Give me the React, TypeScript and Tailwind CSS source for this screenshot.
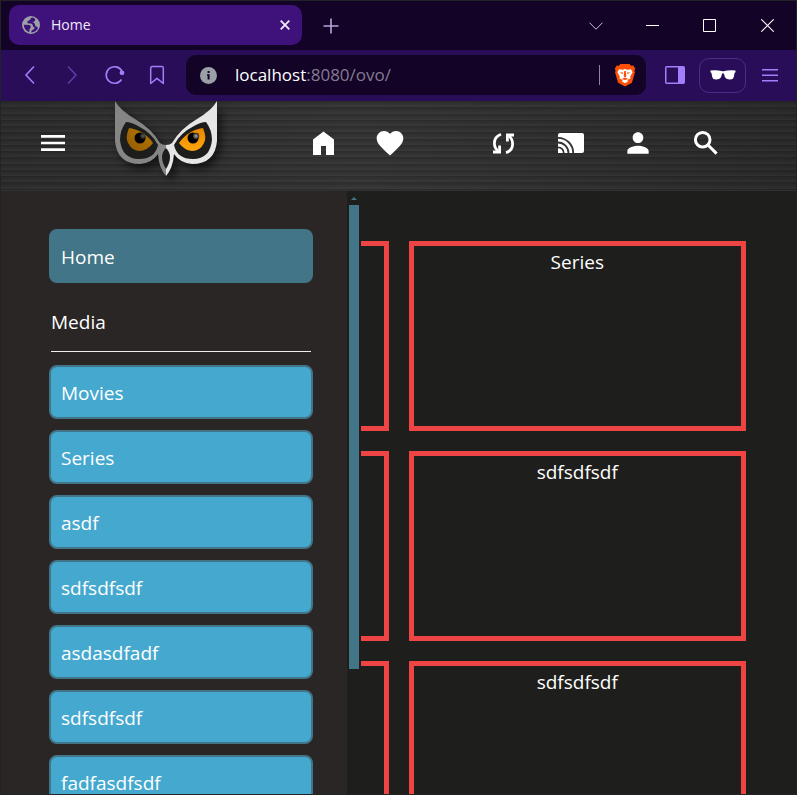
import type { ReactNode } from "react";
import { MdFavorite, MdPerson, MdMenu } from "react-icons/md";

const media = ["Movies", "Series", "asdf", "sdfsdfsdf", "asdasdfadf", "sdfsdfsdf", "fadfasdfsdf"];
const cards = ["", "Series", "", "sdfsdfsdf", "", "sdfsdfsdf"];

function IconButton({ label, className, children }: { label: string; className?: string; children: ReactNode }) {
  return (
    <button type="button" aria-label={label} className={"flex shrink-0 items-center justify-center " + (className ?? "")}>
      {children}
    </button>
  );
}

function TitleBar() {
  return (
    <div className="flex h-[49px] items-center bg-[#130327] pl-2 text-[#d8ccf5]">
      <div className="mb-[2px] flex h-10 w-[293px] shrink-0 items-center rounded-[10px] bg-[#3f117b] pr-[7px] pl-3">
        <svg width="20" height="20" viewBox="0 0 20 20" className="shrink-0">
          <circle cx="10" cy="10" r="9" fill="#9aa0a6" />
          <path
            d="M11.500 2.600Q9 3 9 5.200 6.500 5 6.300 7q.2 1.800 2.500 1.500 2.800-.5 3 2 .2 1.700 1.700 2 .3 1.800-1.500 2.300-1.800.3-1.800 2.700 5-.3 6.800-4.500-1-1.500-2.800-2 0-3.500-3-4 3.300-.3 3-2.700-.2-1.200-2.700-1.700z"
            fill="#3f117b"
          />
          <path d="M2.800 9.800l5.700.2q2 .8 1 2.700-1.500 1-1.200 4.500Q3 15.500 2.800 9.800z" fill="#3f117b" />
        </svg>
        <span className="ml-[10px] flex-1 text-[14px] text-[#f0eafa]">Home</span>
        <IconButton label="Close tab" className="size-5 text-[#f0eafa]">
          <svg width="10" height="10" viewBox="0 0 10 10" stroke="currentColor" strokeWidth="1.8">
            <path d="M.7.7l8.6 8.6M9.3.7L.7 9.3" />
          </svg>
        </IconButton>
      </div>
      <IconButton label="New tab" className="ml-[19px] size-5 text-[#b7a6dd]">
        <svg width="16" height="16" viewBox="0 0 16 16" stroke="currentColor" strokeWidth="1.6">
          <path d="M8 .5v15M.5 8h15" />
        </svg>
      </IconButton>
      <div className="ml-auto flex items-center text-white">
        <IconButton label="Search tabs" className="h-10 w-[57px] text-[#c9c2d4]">
          <svg width="14" height="8" viewBox="0 0 14 8" fill="none" stroke="currentColor">
            <path d="M.5.7L7 7.2 13.5.7" />
          </svg>
        </IconButton>
        <IconButton label="Minimize" className="h-10 w-[57px]">
          <svg width="13" height="1" viewBox="0 0 13 1" fill="currentColor">
            <path d="M0 0h13v1H0z" />
          </svg>
        </IconButton>
        <IconButton label="Maximize" className="h-10 w-[57px]">
          <svg width="13" height="13" viewBox="0 0 13 13" fill="none" stroke="currentColor">
            <path d="M.5.5h12v12H.5z" />
          </svg>
        </IconButton>
        <IconButton label="Close window" className="h-10 w-[58px]">
          <svg width="13" height="13" viewBox="0 0 13 13" fill="none" stroke="currentColor" strokeWidth="1.1">
            <path d="M.3.3l12.4 12.4M12.7.3L.3 12.7" />
          </svg>
        </IconButton>
      </div>
    </div>
  );
}

function AddressBar() {
  return (
    <div className="flex h-[51px] items-center bg-[#2a0d58] pr-[14px] pb-px pl-[18px] text-[#a47dfa]">
      <IconButton label="Back" className="size-6">
        <svg width="24" height="24" viewBox="0 0 24 24" fill="none" stroke="currentColor" strokeWidth="1.6">
          <path d="M15 3.5L7 12l8 8.5" />
        </svg>
      </IconButton>
      <IconButton label="Forward" className="ml-[18px] size-6 text-[#5f3ba3]">
        <svg width="24" height="24" viewBox="0 0 24 24" fill="none" stroke="currentColor" strokeWidth="1.6">
          <path d="M7 3.5l8 8.5-8 8.5" />
        </svg>
      </IconButton>
      <IconButton label="Reload" className="ml-[18px] size-6">
        <svg width="24" height="24" viewBox="0 0 24 24" fill="none" stroke="currentColor" strokeWidth="1.6">
          <path d="M18.500 16.500A8.300 8.300 0 1 1 18.800 8" />
          <circle cx="19" cy="9.800" r="2.400" fill="currentColor" stroke="none" />
        </svg>
      </IconButton>
      <IconButton label="Bookmark" className="ml-[18px] size-6">
        <svg width="24" height="24" viewBox="0 0 24 24" fill="none" stroke="currentColor" strokeWidth="1.5" strokeLinejoin="round">
          <path d="M7 3.5h10a1.5 1.5 0 0 1 1.3 1.5v15.500L12 15.300l-6.300 5.200V5A1.500 1.500 0 0 1 7 3.500z" />
        </svg>
      </IconButton>
      <div className="ml-[17px] flex h-10 min-w-0 flex-1 items-center rounded-[10px] bg-[#130327] pr-[10px] pl-[14px]">
        <svg width="17" height="17" viewBox="0 0 17 17" className="shrink-0">
          <circle cx="8.500" cy="8.500" r="8.500" fill="#9aa0a6" />
          <path d="M7.600 4h2v2h-2zM7 7.200h2.600v5.400h-2V8.800H7z" fill="#130327" />
        </svg>
        <a href="#" className="ml-[18px] flex-1 truncate text-[17px] leading-6 text-[#857b93]">
          <span className="text-white">localhost</span>:8080/ovo/
        </a>
        <div className="h-5 w-px bg-[#8d8696]" />
        <IconButton label="Brave Shields" className="ml-[13px] h-6 w-[23px]">
          <svg width="22" height="24" viewBox="0 0 22 24">
            <path d="M6.5 1h9l1.7 1.7 2-.2 2 3-.8 2.3.5 1.7-3 10.2L11 23.5 4.100 19.700 1.100 9.500l.5-1.700-.8-2.300 2-3 2 .2z" fill="#fb4f08" />
            <path d="M5 6.200l3.800.5L11 6l2.200.7 3.800-.5 1.600 3-2.400 4.300.3 2-3.200 1.600.8 1.300L11 20.300l-3.100-1.900.8-1.300-3.200-1.600.3-2-2.400-4.300z" fill="#fff" />
            <path d="M5.500 9l3.700.7-.7 1.500zM16.500 9l-3.700.7.700 1.500zM10.200 8h1.600l.5 5.500-1.300.7-1.300-.7zM7.500 16l3.500-1.500 3.500 1.500-3.500.9z" fill="#fb4f08" />
          </svg>
        </IconButton>
      </div>
      <IconButton label="Sidebar" className="ml-[17px] size-6">
        <svg width="20" height="18" viewBox="0 0 20 18">
          <rect x=".75" y=".75" width="18.500" height="16.500" rx="1" fill="none" stroke="currentColor" strokeWidth="1.500" />
          <path d="M13 1h6v16h-6z" fill="currentColor" />
        </svg>
      </IconButton>
      <IconButton label="Private profile" className="ml-3 h-[35px] w-[47px] rounded-[10px] border border-[#4d2c86] text-white">
        <svg width="26" height="10" viewBox="0 0 26 10" fill="currentColor">
          <path d="M.5.500Q6.500-.3 11.500 1q1.500.5 3 0 5-1.300 11-.5v1.800l-.9.500-.8 4.200Q23.200 9.600 20 9.500q-4.300 0-5.300-3L14 3.700q-1-.8-2 0l-.7 2.800q-1 3-5.300 3Q2.800 9.600 2.200 7l-.8-4.200-.9-.5z" />
        </svg>
      </IconButton>
      <IconButton label="Browser menu" className="ml-3 size-6">
        <svg width="16" height="14" viewBox="0 0 16 14" fill="currentColor">
          <path d="M0 1h16v1.500H0zM0 6.500h16V8H0zM0 12h16v1.500H0z" />
        </svg>
      </IconButton>
    </div>
  );
}

function OwlLogo() {
  return (
    <svg width="104" height="78" viewBox="0 0 104 78" className="shrink-0 drop-shadow-[4px_5px_4px_rgba(0,0,0,0.6)]">
      <defs>
        <linearGradient id="iris" x1="0" y1="0" x2="0" y2="1">
          <stop offset="0" stopColor="#e88700" />
          <stop offset="1" stopColor="#ffa60a" />
        </linearGradient>
        <linearGradient id="irisShade" x1="0" y1="0" x2="1" y2="1">
          <stop offset="0" stopColor="#bd7a00" />
          <stop offset="1" stopColor="#8f5a02" />
        </linearGradient>
        <radialGradient id="glint">
          <stop offset="0" stopColor="#aaa" />
          <stop offset="1" stopColor="#222" />
        </radialGradient>
        <g id="rim">
          <path d="M103 0v40q-2 23-25 23-12-1-18-10-1 14-8 22V44q4 0 6-2Q66 28 83 18 98 9 103 0z" />
        </g>
      </defs>
      <use href="#rim" fill="#e6e6e6" />
      <use href="#rim" fill="#858585" transform="translate(104 0) scale(-1 1)" />
      {["", "translate(104 0) scale(-1 1)"].map((t, i) => (
        <g key={t} transform={t}>
          <path d="M60 44Q66 32 80 25q7-4 12-4 6 8 6 18-2 19-19 19-16 0-19-14z" fill="#1d1e1b" />
          <path d="M65 42Q71 33 81 29q6-2 8-2 4 10 1 15-4 8-12 8-8-1-13-8z" fill={i ? "url(#irisShade)" : "url(#iris)"} />
        </g>
      ))}
      <circle cx="79" cy="37" r="5.500" fill="#000" />
      <circle cx="82" cy="35" r="3.200" fill="url(#glint)" />
      <circle cx="26" cy="37" r="5.500" fill="#000" />
      <circle cx="29" cy="35" r="3.200" fill="url(#glint)" opacity=".55" />
      <path d="M52 47q8 8 0 21-8-13 0-21z" fill="#1d1e1b" />
    </svg>
  );
}

function AppHeader() {
  return (
    <header className="flex h-[90px] items-center border-b border-[#313130] bg-[linear-gradient(to_right,rgba(0,0,0,0.15),transparent_45%,rgba(0,0,0,0.2)),repeating-linear-gradient(to_bottom,#2b2b2b_0px,#3b3b3b_6px,#2b2b2b_6px,#3b3b3b_13px,#2b2b2b_13px,#3b3b3b_19px,#2b2b2b_19px,#3b3b3b_25px)] pr-[74px] pb-[5px] pl-9 text-white">
      <IconButton label="Menu" className="size-8">
        <MdMenu className="size-8" />
      </IconButton>
      <a href="#" aria-label="Home page" className="ml-[45px] self-start">
        <OwlLogo />
      </a>
      <nav className="ml-auto flex items-center gap-9">
        <IconButton label="Home" className="size-8">
          <svg width="32" height="32" viewBox="0 0 32 32" fill="currentColor">
            <path d="M17.500 4.500L28 12.500V28h-8v-9h-5v9H7V12.500z" />
          </svg>
        </IconButton>
        <IconButton label="Favorites" className="size-8">
          <MdFavorite className="size-8" />
        </IconButton>
        <IconButton label="Sync" className="ml-[44px] size-8">
          <svg width="32" height="32" viewBox="0 0 32 32" fill="none" stroke="currentColor" strokeWidth="2.800">
            <path d="M15 7.200Q8.400 9.600 8.400 16 8.400 21 12 24M20 25.800Q26.600 23.400 26.600 17 26.600 12 23 9" />
            <path d="M7 25h6.600v-6.500M28 8h-6.600v6.500" />
          </svg>
        </IconButton>
        <IconButton label="Cast" className="size-8">
          <svg width="32" height="32" viewBox="0 0 32 32" fill="none">
            <path d="M6 6h22a2 2 0 0 1 2 2v16a2 2 0 0 1-2 2H4V8a2 2 0 0 1 2-2z" fill="currentColor" />
            <path d="M4 10.800A15.200 15.200 0 0 1 19.200 26M4 15.500A10.500 10.500 0 0 1 14.500 26M4 20.300A5.700 5.700 0 0 1 9.700 26" stroke="#343434" strokeWidth="1.800" />
          </svg>
        </IconButton>
        <IconButton label="Account" className="size-8">
          <MdPerson className="size-8" />
        </IconButton>
        <IconButton label="Search" className="size-8">
          <svg width="32" height="32" viewBox="0 0 32 32" fill="none" stroke="currentColor" strokeWidth="3">
            <circle cx="12.700" cy="12.700" r="7.300" />
            <path d="M18 18l8.600 8.600" />
          </svg>
        </IconButton>
      </nav>
    </header>
  );
}

function Sidebar() {
  const item = "flex h-[54px] items-center rounded-[8px] border-2 border-[#417587] px-[10px] pt-[2px]";
  return (
    <aside className="absolute inset-y-0 left-0 flex w-[360px] overflow-hidden">
      <nav className="flex-1 bg-[#2a2625] pt-[38px] pr-[34px] pl-12">
        <a href="#" className={item + " bg-[#417587]"}>Home</a>
        <h2 className="mx-[2px] mt-[10px] mb-[13px] flex h-[59px] items-center border-b border-[#efefef]">Media</h2>
        <ul className="flex flex-col gap-[11px]">
          {media.map((name, i) => (
            <li key={i}>
              <a href="#" className={item + " bg-[#45a9cf]"}>{name}</a>
            </li>
          ))}
        </ul>
      </nav>
      <div aria-hidden="true" className="flex w-[14px] flex-col items-center bg-[#1e1e1c] pt-[6px]">
        <svg width="6" height="3" viewBox="0 0 6 3" className="mb-[5px] fill-[#417587]">
          <path d="M3 0l3 3H0z" />
        </svg>
        <div className="h-[464px] w-[10px] bg-[#417587]" />
      </div>
    </aside>
  );
}

export default function App() {
  return (
    <div className="flex h-screen flex-col overflow-hidden border border-[#222326] bg-[#1e1e1c] font-['Open_Sans','Noto_Sans',sans-serif] text-[19px] leading-6 text-white">
      <TitleBar />
      <AddressBar />
      <AppHeader />
      <div className="relative min-h-0 flex-1 overflow-hidden">
        <main className="grid grid-cols-2 gap-5 p-[50px]">
          {cards.map((name, i) => (
            <section key={i} className="h-[190px] border-[5px] border-[#ef4444] pt-1 text-center">
              {name}
            </section>
          ))}
        </main>
        <Sidebar />
      </div>
    </div>
  );
}
